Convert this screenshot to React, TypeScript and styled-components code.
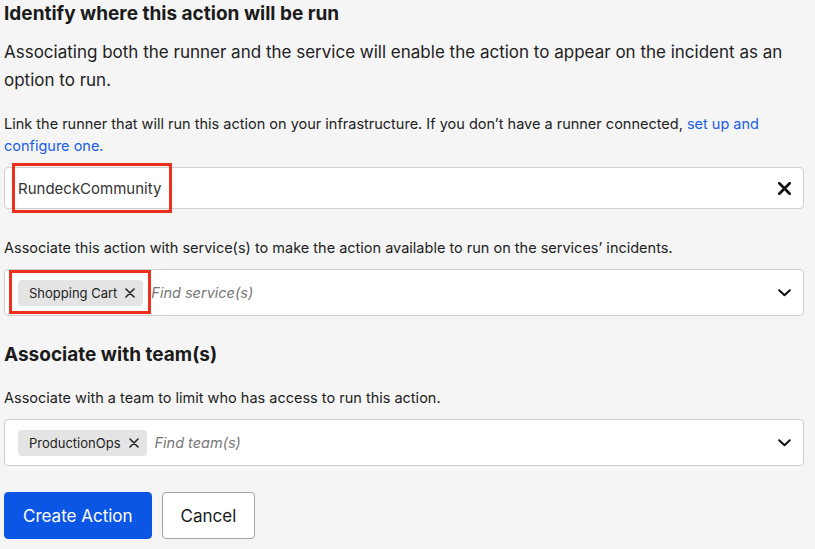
import styled, { createGlobalStyle } from "styled-components";

const Global = createGlobalStyle`
  body {
    margin: 0;
    background: #f5f5f5;
    font-family: Inter, "Noto Sans", Arial, sans-serif;
    color: #1a1a1a;
  }
`;

const Page = styled.div`
  width: 800px;
  padding-left: 4px;
  display: flex;
  flex-direction: column;
`;

const Heading = styled.h2<{ $top?: number }>`
  margin: ${(p) => p.$top ?? 0}px 0 0;
  font-size: 19px;
  line-height: 28px;
  font-weight: 700;
  color: #1b1b1b;
`;

const Lead = styled.p`
  margin: 10px 0 0;
  font-size: 17px;
  line-height: 28px;
  color: #222;
`;

const Hint = styled.p<{ $top: number }>`
  margin: ${(p) => p.$top}px 0 0;
  font-size: 14.5px;
  line-height: 22px;
  color: #222;
`;

const Link = styled.a`
  color: #1a5de8;
  text-decoration: none;
`;

const Field = styled.div<{ $h: number }>`
  position: relative;
  margin-top: 10px;
  height: ${(p) => p.$h}px;
  box-sizing: border-box;
  background: #fff;
  border: 1px solid #cfcfcf;
  border-radius: 4px;
  display: flex;
  align-items: center;
  padding: 0 12px 0 13px;
  gap: 8px;
`;

const Value = styled.span`
  font-size: 15px;
  color: #333;
  flex: 1;
`;

const Chip = styled.span`
  display: inline-flex;
  align-items: center;
  gap: 8px;
  height: 26px;
  padding: 0 8px 0 11px;
  border-radius: 4px;
  background: #e4e4e4;
  font-size: 13px;
  color: #222;
`;

const Placeholder = styled.span`
  flex: 1;
  font-size: 14.5px;
  font-style: italic;
  color: #777;
`;

const Icon = styled.svg`
  flex: none;
  display: block;
`;

const Highlight = styled.div<{ $l: number; $t: number; $w: number; $h: number }>`
  position: absolute;
  left: ${(p) => p.$l}px;
  top: ${(p) => p.$t}px;
  width: ${(p) => p.$w}px;
  height: ${(p) => p.$h}px;
  box-sizing: border-box;
  border: 3px solid #eb2f1c;
  pointer-events: none;
`;

const Actions = styled.div`
  margin-top: 26px;
  display: flex;
  gap: 10px;
`;

const Button = styled.button<{ $primary?: boolean }>`
  height: 47px;
  padding: 0 18px;
  border-radius: 4px;
  font-family: inherit;
  font-size: 17px;
  cursor: pointer;
  background: ${(p) => (p.$primary ? "#0c56e6" : "#fff")};
  color: ${(p) => (p.$primary ? "#fff" : "#1a1a1a")};
  border: 1px solid ${(p) => (p.$primary ? "#0c56e6" : "#a3a3a3")};
`;

const SmallX = () => (
  <Icon width="10" height="10" viewBox="0 0 10 10">
    <path d="M1 1 L9 9 M9 1 L1 9" stroke="#222" strokeWidth="1.6" strokeLinecap="round" />
  </Icon>
);

const BigX = () => (
  <Icon width="13" height="13" viewBox="0 0 13 13">
    <path d="M1.3 1.3 L11.7 11.7 M11.7 1.3 L1.3 11.7" stroke="#111" strokeWidth="2.7" strokeLinecap="round" />
  </Icon>
);

const Chevron = () => (
  <Icon width="13" height="8" viewBox="0 0 13 8">
    <path d="M1.2 1.2 L6.5 6.3 L11.8 1.2" stroke="#111" strokeWidth="2" fill="none" strokeLinecap="round" strokeLinejoin="round" />
  </Icon>
);

export default function App() {
  return (
    <>
      <Global />
      <Page>
        <Heading>Identify where this action will be run</Heading>
        <Lead>
          Associating both the runner and the service will enable the action to appear on the incident as an
          option to run.
        </Lead>
        <Hint $top={19}>
          Link the runner that will run this action on your infrastructure. If you don’t have a runner connected,{" "}
          <Link href="#">set up and configure one.</Link>
        </Hint>
        <Field $h={42}>
          <Value>RundeckCommunity</Value>
          <BigX />
          <Highlight $l={7} $t={-5} $w={160} $h={50} />
        </Field>

        <Hint $top={28}>
          Associate this action with service(s) to make the action available to run on the services’ incidents.
        </Hint>
        <Field $h={47}>
          <Chip>
            Shopping Cart <SmallX />
          </Chip>
          <Placeholder>Find service(s)</Placeholder>
          <Chevron />
          <Highlight $l={4} $t={0} $w={142} $h={44} />
        </Field>

        <Heading $top={25}>Associate with team(s)</Heading>
        <Hint $top={18}>Associate with a team to limit who has access to run this action.</Hint>
        <Field $h={47}>
          <Chip>
            ProductionOps <SmallX />
          </Chip>
          <Placeholder>Find team(s)</Placeholder>
          <Chevron />
        </Field>

        <Actions>
          <Button $primary>Create Action</Button>
          <Button>Cancel</Button>
        </Actions>
      </Page>
    </>
  );
}
